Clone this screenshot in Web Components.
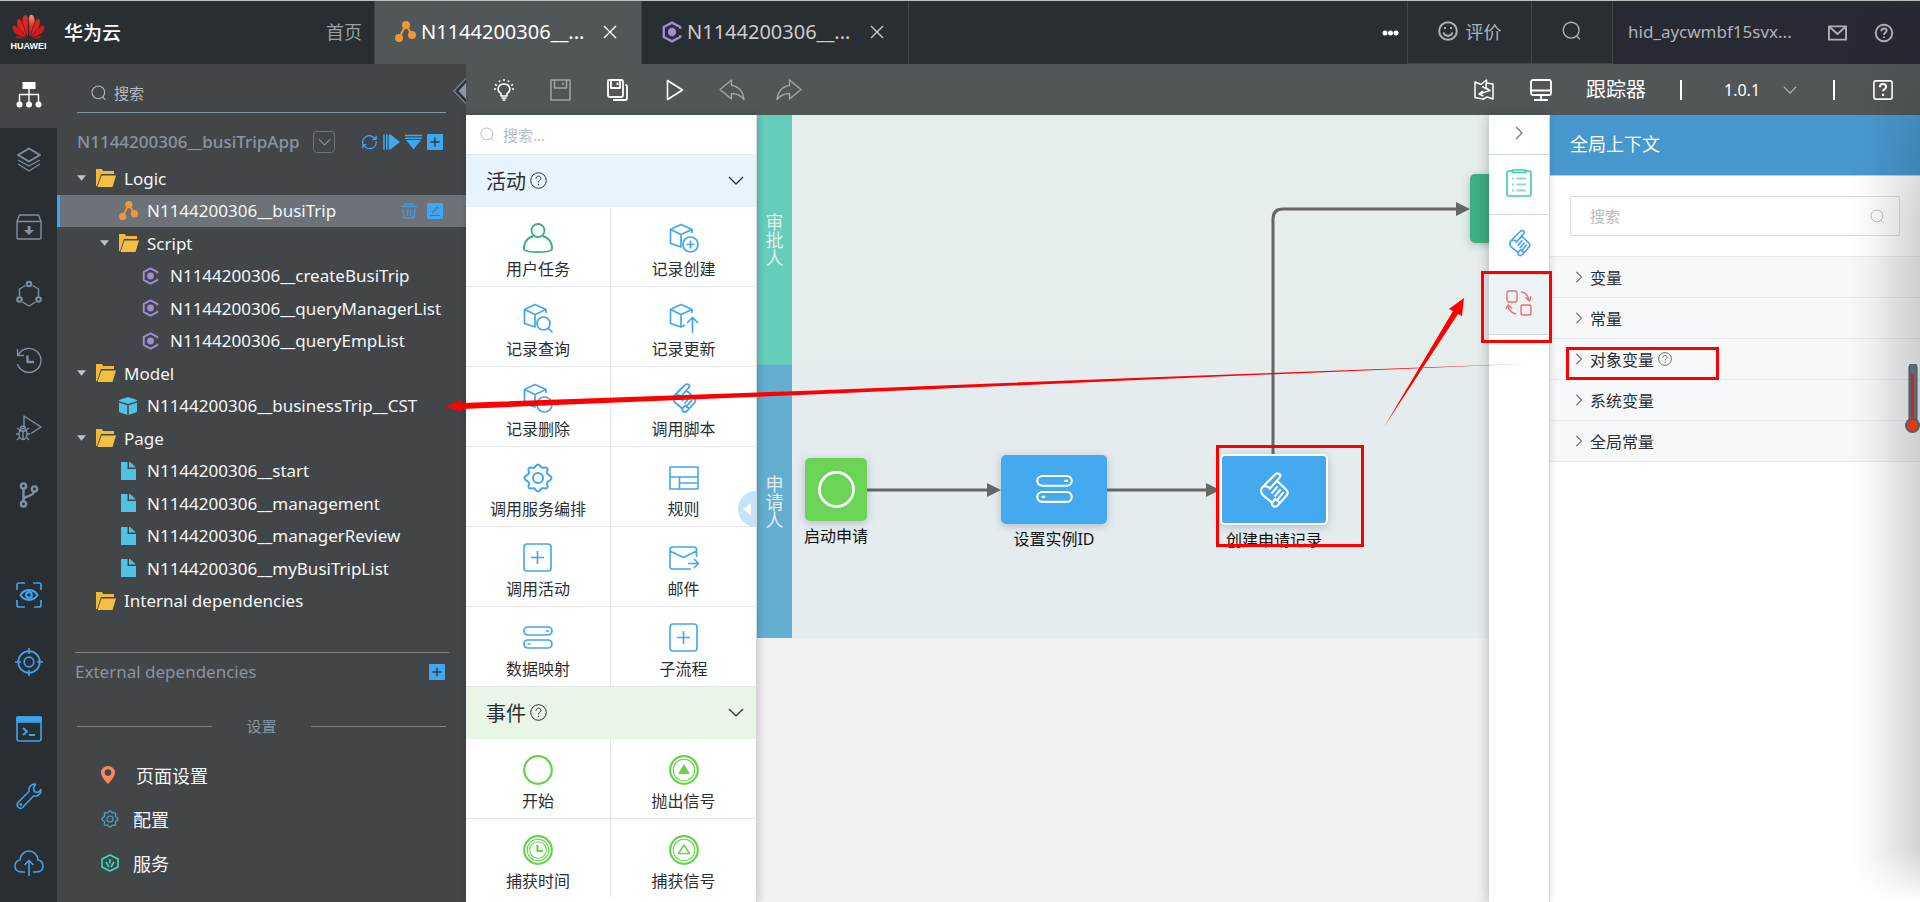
<!DOCTYPE html>
<html lang="zh-CN">
<head>
<meta charset="utf-8">
<meta name="viewport" content="width=device-width, initial-scale=1">
<title>华为云 - N1144200306__busiTrip</title>
<style>
  body { margin: 0; font-family: "Noto Sans", "Noto Sans CJK SC", sans-serif; }
</style>
</head>
<body>
<app-shell></app-shell>

<script>
const CUBE = '<path d="M1.5 6.5 12 1.5l11 5-11 5zM1.5 6.5v14L12 24V11.5M23 6.5V10"/>';
const SCROLL = '<path d="M15.500 2.500 5.500 12.500c-2 2-1.500 5 .5 7L14 26M15.500 2.500c2-2.500 6-1 4.500 1.800L11.500 14c-1-2.500-4.500-2.500-6-1.500M17.500 7.500l7.500 7c1.700 1.700 1.700 3.800.3 5.300L18 28c-2 2-5.500.5-4.500-2.500l2.500-3 4 3M13 18l5-6M15.500 20.500l5-6M18 22.800l5-6"/>';
const GEAR = '<path d="M15 1.500c2 0 2.200 2.600 4 3.200s3.800-1 5.200.4-.9 3.500-.1 5.300 4.400 2 4.400 4.600-3.700 2.800-4.400 4.600 1.500 3.900.1 5.300-3.500-.1-5.200.4-2 3.200-4 3.200-2.300-2.600-4-3.200-3.800 1-5.200-.4.9-3.500.1-5.300S1.500 17.500 1.500 15s3.700-2.800 4.400-4.600S4.400 6.500 5.800 5.100s3.500.1 5.200-.4 2-3.200 4-3.200z"/><circle cx="15" cy="15" r="5"/>';
const SEARCH = '<circle cx="11" cy="11" r="9.500"/><path d="m17.500 18 4 4"/>';
const MAPPING = '<rect x="1" y="4" width="28" height="8" rx="4"/><rect x="1" y="17" width="28" height="8" rx="4"/><path d="M23 8h3M4.500 21h3"/>';
const QUESTION = '<circle cx="12" cy="12" r="11"/><path d="M8.500 9.500c0-5 7-4.500 7-.5 0 2.500-3.500 2.500-3.500 5.500M12 16.500v2"/>';

/* name -> [viewBox, stroke width, markup] */
const ICONS = {
  search: ['0 0 24 24', 1.6, SEARCH],
  close: ['0 0 14 14', 1.4, '<path d="m1 1 12 12M13 1 1 13"/>'],
  chevron: ['0 0 16 9', 1.3, '<path d="m1 1 7 7 7-7"/>'],
  right: ['0 0 8 14', 1.2, '<path d="m1 1 6 6-6 6"/>'],
  question: ['0 0 24 24', 1.4, QUESTION],
  flow: ['0 0 21 21', 2, '<path d="M11 4 4 16.500M11 4l6 10"/><g fill="currentColor" stroke="none"><circle cx="11" cy="4" r="4"/><circle cx="4" cy="17" r="4"/><circle cx="17" cy="14" r="4"/></g>'],
  script: ['0 0 18 20', 2.2, '<path d="M16.500 7V5.500L9 1.500 1.500 5.500v9L9 18.500l7.500-4V13"/><circle cx="9" cy="10" r="3.800" fill="currentColor" stroke="none"/>'],
  more: ['0 0 17 6', 0, '<g fill="currentColor"><circle cx="3" cy="3" r="2.500"/><circle cx="8.500" cy="3" r="2.500"/><circle cx="14" cy="3" r="2.500"/></g>'],
  smile: ['0 0 20 20', 2, '<circle cx="10" cy="10" r="8.800"/><path d="M5.500 11.500c1.500 4.500 7.500 4.500 9 0M7 6v2M13 6v2"/>'],
  mail: ['0 0 20 16', 2, '<rect x="1" y="1" width="18" height="14"/><path d="m2 2 8 7 8-7"/>'],
  help: ['0 0 24 24', 2.6, QUESTION],
  caret: ['0 0 10 6', 0, '<path fill="currentColor" d="M0 0h10L5 6z"/>'],
  folder: ['0 0 20 18', 0, '<path fill="#f0b93a" d="M0 0h6l1 2h11v3H5L1 17H0z"/><path fill="#f2c044" d="M5.500 6.500H20L16.500 18H1.500z"/>'],
  cube: ['0 0 18 18', 0, '<path fill="#4ec3e6" d="M9 0 0 3v1l9 3 9-3V3zM0 5.500v9.500L8.300 18V8.200zM18 5.500v9.500L9.700 18V8.200z"/>'],
  page: ['0 0 15 18', 0, '<path fill="#4ec3e6" d="M0 0h6.500v7H15v11H0zM8 0h1l6 5.500H8z"/>'],
  refresh: ['0 0 18 18', 1.4, '<path d="M1.500 11C0 4 8-1 14 4l2.500 2M16.500 2v4h-4M16.500 8c1 7-7 11-12.500 6.500L1.500 12M1.500 16v-4h4"/>'],
  expand: ['0 0 18 16', 1.6, '<path d="M1 0v16M4 0v16"/><path fill="currentColor" stroke="none" d="M6 0h2l10 8-10 8H6z"/>'],
  collapse: ['0 0 18 16', 1.6, '<path d="M0 1h18M0 4h18"/><path fill="currentColor" stroke="none" d="M1 6h16L9 16z"/>'],
  add: ['0 0 16 16', 0, '<rect width="16" height="16" rx="1" fill="#41a6f0"/><path d="M8 3.500v9M3.500 8h9" stroke="#2b3b48" stroke-width="1.400"/>'],
  trash: ['0 0 16 16', 1.3, '<path d="M0 3.500h16M4 3V1h8v2M2 5.500 3 15h10l1-9.500M6.500 6v7M9.500 6v7"/>'],
  edit: ['0 0 16 16', 0, '<rect width="16" height="16" rx="1" fill="#41a6f0"/><path d="M5 10l6-6M3 12.500h10" stroke="#5c7386" stroke-width="1.200"/>'],
  pin: ['0 0 14 18', 0, '<path fill="#f58660" fill-rule="evenodd" d="M7 0C3 0 0 3 0 6.500 0 10 3 14 7 18c4-4 7-8 7-11.500C14 3 11 0 7 0zm0 3.300a3.300 3.300 0 1 1 0 6.600 3.300 3.300 0 0 1 0-6.600z"/>'],
  gear: ['0 0 30 30', 2, GEAR],
  power: ['0 0 18 18', 1.6, '<path d="M9 1 17 5v8l-8 4-8-4V5zM9 5v4.500M5 8l3 5M13 8l-3 5"/>'],

  sitemap: ['0 0 26 26', 1.4, '<rect x="6.500" y="0" width="13" height="7" fill="currentColor" stroke="none"/><path d="M13 7v15M3.500 22V12.500h19V22"/><g fill="currentColor" stroke="none"><circle cx="3.500" cy="22.500" r="3"/><circle cx="13" cy="22.500" r="3"/><circle cx="22.500" cy="22.500" r="3"/></g>'],
  layers: ['0 0 26 26', 1.3, '<path stroke-width="2" d="m13 1.500 11 6.500-11 6.500L2 8z"/><path d="m2 13 11 6 11-6M2 17l11 7 11-7"/>'],
  archive: ['0 0 26 26', 1.4, '<path d="M1 7.500 3.500 1h19L25 7.500V24c0 .6-.4 1-1 1H2c-.6 0-1-.4-1-1zM1 7.500h24"/><path fill="currentColor" stroke="none" d="M11.500 12h3v4h3.500l-5 5-5-5h3.500z"/>'],
  hexagon: ['0 0 26 26', 1.4, '<path d="M9.500 4.500 3.500 8v7.500M16.500 4.500l6 3.500v7.500M6.500 21l6.500 4 6.500-4"/><g stroke-width="2"><circle cx="13" cy="3" r="2.300"/><circle cx="3.500" cy="18.500" r="2.300"/><circle cx="22.500" cy="18.500" r="2.300"/></g>'],
  history: ['0 0 26 26', 1.4, '<path d="M2 7.500A12 12 0 1 1 1.500 16M1.500 1v6.500H8"/><path stroke-width="2.400" d="M11.500 7.500V14H18"/>'],
  debug: ['0 0 26 26', 1.4, '<path d="M8 11V1l17 11-10 6.500"/><ellipse cx="7" cy="19" rx="4" ry="5.500"/><path d="M3 16h8M7 16v8M0 19h3M11 19h3M1 13l3 2M13 13l-3 2M1 25l3-3M13 25l-3-3M4.500 13.500c0-3 5-3 5 0"/>'],
  branch: ['0 0 26 26', 2.4, '<circle cx="7.500" cy="4" r="2.600"/><circle cx="7.500" cy="22" r="2.600"/><circle cx="18.500" cy="7" r="2.600"/><path d="M7.500 6.500v13M18 9.500c-.5 5-8 4-10 7"/>'],
  eye: ['0 0 26 26', 1.7, '<path d="M1 8V3c0-1.500.7-2 2-2h6M17 1h6c1.300 0 2 .7 2 2v5M25 18v5c0 1.300-.7 2-2 2h-5M9 25H3c-1.300 0-2-.7-2-2v-5"/><path stroke-width="2.200" d="M4.500 13c4-6.500 13-6.500 17 0-4 6.500-13 6.500-17 0z"/><circle cx="13" cy="13" r="2.800" stroke-width="2.200"/>'],
  target: ['0 0 28 28', 1.7, '<circle cx="14" cy="14" r="10.800"/><circle cx="14" cy="14" r="4.800"/><path d="M14 0v6M14 22v6M0 14h6M22 14h6"/>'],
  terminal: ['0 0 26 26', 1.6, '<rect x="1" y="1" width="24" height="24" rx="2"/><path fill="currentColor" d="M1 1h24v5H1z"/><path stroke-width="2" d="m7 12 4 3.500L7 19M13 19h6"/>'],
  wrench: ['0 0 26 26', 1.6, '<path d="M19.500 1.200c-4-.6-7.500 3-6.300 7L2 19.500C-.5 22.500 3.500 27 6.500 24.500L17.500 13c4.500 1.200 8-2.500 7.500-6.500l-3 3-3.500-.8-1-3.700z"/><circle cx="4.800" cy="21.500" r=".6"/>'],
  cloud: ['0 0 30 26', 1.6, '<path d="M11 22H7.500C3 22 1 19 1 16c0-3 2-5.500 5-6 .5-5.500 4.500-9 9-9s8.500 3.500 9 9c3 .5 5 3 5 6s-2 6-6.500 6H19M15 26V10.500M10.500 15l4.500-4.500 4.500 4.500"/>'],

  bulb: ['0 0 20 22', 1.6, '<path d="M7 17v-2.500C2 11.500 4 5 10 5s8 6.500 3 9.500V17zM7.500 19h5M8.500 21h3M10 0v2M5 1.500l1 1.500M15 1.500 14 3M1 5.500l2 1M19 5.500l-2 1M0 10h2M18 10h2"/>'],
  save: ['0 0 21 22', 1.5, '<path d="M1 1h19v20H1zM4.500 1v8h12V1M13 3.500V6"/>'],
  saveall: ['0 0 21 22', 1.8, '<path d="M2 1h12.500C16 1 16 2 16 3v13c0 1.500-.5 2-2 2H3c-1.500 0-2-.5-2-2V2c0-.6.400-1 1-1zM4 1.500V9h9V1.500M10.500 3.500V6M18.500 5.500 20 7v12c0 1.500-.5 2-2 2H6"/>'],
  play: ['0 0 18 22', 1.6, '<path d="M1.500 1.500v19L16.500 11z"/>'],
  undo: ['0 0 26 22', 1.4, '<path d="M12.500 1v5.500C19 7 24 12 25 20.500 21.500 16 18 14.500 12.500 14.500V20L1 10.500z"/>'],
  redo: ['0 0 26 22', 1.4, '<path d="M13.500 1v5.500C7 7 2 12 1 20.500c3.500-4.500 7-6 12.500-6V20L25 10.500z"/>'],
  map: ['0 0 20 22', 1.5, '<path d="M8.500 20 1 18.500V3l6 2.500M7 5.500 12.500 1v3l6.500 1v15l-6-2-4.500 2.500M12 4.500v4l4 3-11 3.500M9 12l-4 3 4.500 2M8 7.500l8 4"/>'],
  monitor: ['0 0 22 22', 1.8, '<rect x="1" y="1" width="20" height="15" rx="2"/><path d="M1 11.500h20M11 16v4.500M4 21h14"/>'],
  helpbox: ['0 0 22 22', 1.8, '<rect x="1" y="1" width="20" height="20" rx="2"/><path stroke-width="2.200" d="M7.500 8c0-5 7-4.500 7-.5 0 2.500-3.500 2.500-3.500 5M11 15v2.500"/>'],

  user: ['0 0 30 30', 1.8, '<circle cx="15" cy="7.500" r="6.500"/><path d="M10.500 13C4 14.500.5 20 1 26.500 4 30 26 30 29 26.500 29.500 20 26 14.500 19.500 13"/>'],
  record: ['0 0 30 30', 1.7, CUBE + '<circle cx="21.500" cy="21.500" r="7.500"/><path d="M21.500 17.500v8M17.500 21.500h8"/>'],
  query: ['0 0 30 30', 1.7, CUBE + '<circle cx="20.500" cy="20.500" r="6.500"/><path d="m25 25 4.500 4.500"/>'],
  update: ['0 0 30 30', 1.7, CUBE + '<path d="M23.500 30V15M18 20l5.500-5.500 5.500 5.500M12 24l4-2"/>'],
  remove: ['0 0 30 30', 1.7, CUBE + '<circle cx="21.500" cy="21.500" r="7.500"/><path d="M17.500 21.500h8"/>'],
  scroll: ['0 0 30 30', 1.8, SCROLL],
  rule: ['0 0 30 30', 1.6, '<path d="M1 4h28v22H1zM1 14h28M10.500 14v12M10.500 20H29"/>'],
  plusbox: ['0 0 30 30', 1.6, '<rect x="1" y="1" width="27" height="27" rx="3"/><path d="M14.500 8v13M8 14.500h13"/>'],
  send: ['0 0 30 30', 1.6, '<path d="M22 26H3.500C2 26 1 25 1 23.500v-17C1 5 2 4 3.500 4h21C26 4 27.500 5 27.500 6.500V14M1 8l13.500 6.500L27.500 8M19 20.500h10M25 16l4.500 4.500L25 25"/>'],
  mapping: ['0 0 30 30', 1.7, MAPPING],
  start: ['0 0 30 30', 2.2, '<circle cx="15" cy="15" r="13.800"/>'],
  throw: ['0 0 30 30', 1.1, '<circle cx="15" cy="15" r="13.800" stroke-width="2.200"/><circle cx="15" cy="15" r="10.800"/><path fill="currentColor" d="m15 10 5 8.500H10z"/>'],
  timer: ['0 0 30 30', 1.1, '<circle cx="15" cy="15" r="13.800" stroke-width="2.200"/><circle cx="15" cy="15" r="10.800"/><circle cx="15" cy="15" r="8.300"/><path stroke-width="2.200" d="M14.500 10v6H20"/>'],
  catch: ['0 0 30 30', 1.1, '<circle cx="15" cy="15" r="13.800" stroke-width="2.200"/><circle cx="15" cy="15" r="10.800"/><path stroke-width="1.500" d="m15 10 5.500 8.500h-11z"/>'],

  list: ['0 0 26 28', 1.6, '<path d="M6 2H3C1.500 2 1 3 1 4v21c0 1.500 1 2 2 2h20c1.500 0 2-.7 2-2V4c0-1.500-.7-2-2-2h-3M6.500 1h13v2.500h-13z"/><path stroke="#8fdacb" stroke-width="2" d="M6 9.500h2M10.500 9.500H20M6 15.500h2M10.500 15.500H20M6 21.500h2M10.500 21.500H20"/>'],
  context: ['0 0 26 26', 1.4, '<rect x="1" y="1" width="10" height="11" rx="2"/><rect x="15" y="15" width="10" height="10" rx="2"/><path d="M15 2c5 0 7 4 8 8.500M19.500 7.500l4 3.500 1.500-4.500M10 24c-4-1-7-4-8-8M0 19l2-4 4 3"/>'],
};

const define = (name, html, setup) => {
  const tpl = document.createElement('template');
  tpl.innerHTML = html;
  customElements.define(name, class extends HTMLElement {
    constructor() {
      super();
      this.attachShadow({ mode: 'open' }).append(tpl.content.cloneNode(true));
    }
    connectedCallback() { if (setup) setup(this, this.shadowRoot); }
  });
};

const BUTTON = 'button{appearance:none;border:0;background:none;padding:0;margin:0;font:inherit;color:inherit;display:flex;align-items:center;justify-content:center;cursor:pointer}';

define('ui-icon', `
  <style>
    :host{display:inline-block;flex:none;line-height:0}
    svg{display:block;width:100%;height:100%;overflow:visible;fill:none;stroke:currentColor;stroke-linejoin:round}
  </style><svg aria-hidden="true"></svg>`, (el, root) => {
  const [box, width, body] = ICONS[el.getAttribute('name')];
  const svg = root.querySelector('svg');
  svg.setAttribute('viewBox', box);
  svg.setAttribute('stroke-width', width);
  if (!width) svg.style.stroke = 'none';
  svg.innerHTML = body;
  const [, , w, h] = box.split(' ');
  el.style.width = (el.getAttribute('w') || w) + 'px';
  el.style.height = (el.getAttribute('h') || h) + 'px';
});

/* ---------- header ---------- */
define('brand-logo', `
  <style>
    :host{display:flex;flex-direction:column;align-items:center;width:33px;gap:2px}
    svg{width:33px;height:25px;display:block}
    span{font:bold 9px/10px "Liberation Sans",sans-serif;color:#fff}
  </style>
  <svg viewBox="0 0 33 25" aria-hidden="true"><defs><linearGradient id="g" x1="0" y1="0" x2="0" y2="1"><stop offset="0" stop-color="#f7a070"/><stop offset=".5" stop-color="#e8302a"/><stop offset="1" stop-color="#d8101c"/></linearGradient></defs>
    <g stroke="#292e32" stroke-width=".7">
      <path fill="#e2231f" d="M16 23.500C10 14 8 6 12 1c2.500-1.500 4.500 0 4.300 5z"/><path fill="url(#g)" d="M17 23.500c6-9.500 8-17.500 4-22.500-2.500-1.500-4.500 0-4.300 5z"/>
      <path fill="#e2231f" d="M15 23.500C7 17 2.500 11 6 4c4 1 6 8 9 19.500z"/><path fill="#e2231f" d="M18 23.500C26 17 30.500 11 27 4c-4 1-6 8-9 19.500z"/>
      <path fill="#d8181e" d="M14.500 24C4 22-1.500 17 1 11c5 1 9 6 13.500 13z"/><path fill="#d8181e" d="M18.500 24c10.500-2 16-7 13.500-13-5 1-9 6-13.500 13z"/>
      <path fill="#c8141b" d="M14 24.800H6c-1 0-3-2-3-2.800 3-.5 8 .5 11 2.800zM19 24.800h8c1 0 3-2 3-2.800-3-.5-8 .5-11 2.800z"/>
    </g></svg><span>HUAWEI</span>`);

define('editor-tab', `
  <style>${BUTTON}
    :host{display:flex;align-items:center;box-sizing:border-box;width:267px;padding:0 24px 2px 20px;border-right:1px solid #40464a;color:#ccc}
    :host([active]){background:#515658;color:#fff}
    .name{flex:1;justify-content:flex-start;gap:5px;font-size:20px;line-height:27px}
  </style>
  <button class="name"><slot name="icon"></slot><slot></slot></button>
  <button aria-label="关闭"><ui-icon name="close"></ui-icon></button>`);

define('app-header', `
  <style>${BUTTON}
    :host{display:flex;height:63px;background:#292e32;border-top:1px solid #b9bfba;color:#aeb2b8}
    .brand{display:flex;align-items:center;gap:19px;padding-left:12px;width:375px;box-sizing:border-box}
    .brand b{color:#fff;font-size:19px;font-weight:500;padding-bottom:2px}
    .brand a{margin-left:auto;padding:0 12px 3px 0;color:#9aa0a6;text-decoration:none;font-size:18px}
    nav{display:flex;flex:1}
    .brand,nav{border-right:1px solid #40464a}
    .more{margin-left:auto;padding:0 8px;color:#fff}
    .cell{border-right:1px solid #40464a;border-bottom:1px solid #40464a;gap:8px;font-size:18px;box-sizing:border-box;padding-bottom:2px}
    .rate{width:124px}.find{width:81px}
    .user{display:flex;align-items:center;box-sizing:border-box;width:307px;padding:0 27px 0 15px;background:#282a33;font-size:17px}
    .user span{flex:1;padding-bottom:2px}
    .user button+button{margin-left:28px}
    .orange{color:#ef9639}.violet{color:#a08bd4}
  </style>
  <div class="brand"><brand-logo></brand-logo><b>华为云</b><a href="#home">首页</a></div>
  <nav>
    <editor-tab active><ui-icon slot="icon" class="orange" name="flow"></ui-icon>N1144200306__...</editor-tab>
    <editor-tab><ui-icon slot="icon" class="violet" name="script" w="20" h="22"></ui-icon>N1144200306__...</editor-tab>
    <button class="more" aria-label="更多"><ui-icon name="more"></ui-icon></button>
  </nav>
  <button class="cell rate"><ui-icon name="smile"></ui-icon>评价</button>
  <button class="cell find" aria-label="搜索"><ui-icon name="search" w="20" h="20"></ui-icon></button>
  <div class="user"><span>hid_aycwmbf15svx...</span>
    <button aria-label="消息"><ui-icon name="mail" w="19" h="16"></ui-icon></button>
    <button aria-label="帮助"><ui-icon name="help" w="18" h="18"></ui-icon></button></div>`);

/* ---------- left rail ---------- */
define('nav-rail', `
  <style>${BUTTON}
    :host{display:flex;flex-direction:column;width:57px;flex:none;background:#292e32;color:#8090a0}
    button{height:67px;box-sizing:border-box;padding-bottom:3px}
    .on{height:64px;background:#434648;color:#fff}
    .blue{color:#3fa2ec}
    .gap{margin-top:33px}
  </style>
  <button class="on" aria-label="结构"><ui-icon name="sitemap"></ui-icon></button>
  <button aria-label="图层"><ui-icon name="layers"></ui-icon></button>
  <button aria-label="资产"><ui-icon name="archive"></ui-icon></button>
  <button aria-label="依赖"><ui-icon name="hexagon"></ui-icon></button>
  <button aria-label="历史"><ui-icon name="history"></ui-icon></button>
  <button aria-label="调试"><ui-icon name="debug"></ui-icon></button>
  <button aria-label="分支"><ui-icon name="branch"></ui-icon></button>
  <button class="blue gap" aria-label="预览"><ui-icon name="eye"></ui-icon></button>
  <button class="blue" aria-label="定位"><ui-icon name="target"></ui-icon></button>
  <button class="blue" aria-label="终端"><ui-icon name="terminal"></ui-icon></button>
  <button class="blue" aria-label="工具"><ui-icon name="wrench"></ui-icon></button>
  <button class="blue" aria-label="发布"><ui-icon name="cloud"></ui-icon></button>`);

/* ---------- project explorer ---------- */
define('tree-row', `
  <style>${BUTTON}
    :host{display:flex;align-items:center;padding-right:23px;color:#f4f6f8;font-size:17px;border-left:3px solid transparent;--indent:0px}
    :host([level="1"]){--indent:23px}
    :host([level="2"]){--indent:46px}
    :host([selected]){background:#6c7278;border-left-color:#41a6f0}
    .row{flex:1;justify-content:flex-start;padding-left:calc(17px + var(--indent))}
    .caret{width:9px;margin-right:10px;display:flex;color:#bcc4cc}
    .glyph{width:19px;margin-right:9px;display:flex}
    .orange{color:#ef9639}.violet{color:#a08bd4}
    .tools{display:none;gap:10px;color:#3f9be0}
    :host([selected]) .tools{display:flex}
  </style>
  <button class="row"><span class="caret"></span><span class="glyph"></span><slot></slot></button>
  <span class="tools"><button aria-label="删除"><ui-icon name="trash"></ui-icon></button><button aria-label="编辑"><ui-icon name="edit"></ui-icon></button></span>`,
(el, root) => {
  const kind = el.getAttribute('kind');
  if (el.hasAttribute('open')) root.querySelector('.caret').innerHTML = '<ui-icon name="caret" w="9" h="6"></ui-icon>';
  const tint = { flow: 'orange', script: 'violet' }[kind] || '';
  const size = { flow: 'w="19" h="19"', script: 'w="17" h="18"', page: 'w="19"' }[kind] || '';
  root.querySelector('.glyph').innerHTML = `<ui-icon class="${tint}" name="${kind}" ${size}></ui-icon>`;
});

define('project-explorer', `
  <style>${BUTTON}
    :host{position:relative;display:flex;flex-direction:column;width:409px;flex:none;background:#434648;color:#8894a2;font-size:17px}
    label{display:flex;align-items:center;box-sizing:border-box;gap:5px;height:49px;margin:0 20px;padding:9px 0 0 14px;border-bottom:1px solid #8296a6;color:#b4bac0}
    input{flex:1;min-width:0;border:0;outline:0;background:none;font:inherit;font-size:15px;color:#fff}
    input::placeholder{color:#b4bac0;opacity:1}
    .app{display:flex;align-items:center;height:49px;padding:8px 23px 0 20px;box-sizing:border-box}
    .app b{font-weight:500}
    .drop{box-sizing:border-box;width:22px;height:22px;margin-left:14px;border:1px solid #6b747c;border-radius:4px}
    .acts{display:flex;gap:5px;margin-left:auto;color:#41a6f0}
    .tree{display:grid;grid-auto-rows:1fr;height:455px}
    .ext{display:flex;align-items:center;justify-content:space-between;box-sizing:border-box;margin:35px 17px 0 18px;padding:0 4px 0 0;border-top:1px solid #808080;height:38px}
    .sep{display:flex;align-items:center;justify-content:space-between;margin:24px 20px 0;font-size:15px;line-height:24px}
    .sep::before,.sep::after{content:"";width:135px;height:1px;background:#808080}
    ul{list-style:none;margin:15px 0 0;padding:0 0 0 44px}
    li{display:flex;align-items:center;height:44px;gap:14px}
    li a{color:#f4f6f8;text-decoration:none;font-size:18px}
    li:first-child{gap:21px}
    .handle{position:absolute;right:0;top:14px}
    .handle svg{display:block;width:13px;height:26px}
  </style>
  <label><ui-icon name="search" w="16" h="16"></ui-icon><input type="text" placeholder="搜索" aria-label="搜索"></label>
  <div class="app"><b>N1144200306__busiTripApp</b>
    <button class="drop" aria-label="选择应用"><ui-icon name="chevron" w="13" h="8"></ui-icon></button>
    <span class="acts">
      <button aria-label="刷新"><ui-icon name="refresh" w="17" h="16"></ui-icon></button>
      <button aria-label="展开"><ui-icon name="expand" w="17"></ui-icon></button>
      <button aria-label="折叠"><ui-icon name="collapse" w="17"></ui-icon></button>
      <button aria-label="新增"><ui-icon name="add"></ui-icon></button></span></div>
  <div class="tree">
    <tree-row kind="folder" open>Logic</tree-row>
    <tree-row kind="flow" level="1" selected>N1144200306__busiTrip</tree-row>
    <tree-row kind="folder" level="1" open>Script</tree-row>
    <tree-row kind="script" level="2">N1144200306__createBusiTrip</tree-row>
    <tree-row kind="script" level="2">N1144200306__queryManagerList</tree-row>
    <tree-row kind="script" level="2">N1144200306__queryEmpList</tree-row>
    <tree-row kind="folder" open>Model</tree-row>
    <tree-row kind="cube" level="1">N1144200306__businessTrip__CST</tree-row>
    <tree-row kind="folder" open>Page</tree-row>
    <tree-row kind="page" level="1">N1144200306__start</tree-row>
    <tree-row kind="page" level="1">N1144200306__management</tree-row>
    <tree-row kind="page" level="1">N1144200306__managerReview</tree-row>
    <tree-row kind="page" level="1">N1144200306__myBusiTripList</tree-row>
    <tree-row kind="folder">Internal dependencies</tree-row>
  </div>
  <div class="ext"><span>External dependencies</span><button aria-label="新增依赖"><ui-icon name="add"></ui-icon></button></div>
  <div class="sep">设置</div>
  <ul>
    <li><ui-icon name="pin"></ui-icon><a href="#page">页面设置</a></li>
    <li><ui-icon name="gear" w="18" h="18" style="color:#48a9c8"></ui-icon><a href="#config">配置</a></li>
    <li><ui-icon name="power" style="color:#35e0bf"></ui-icon><a href="#service">服务</a></li>
  </ul>
  <button class="handle" aria-label="收起"><svg viewBox="0 0 13 26"><path d="M13 .5 1 13l12 12.500" fill="#2b3238" stroke="#7c8794" stroke-width="1.200"/><path d="M13 5 5.500 13l7.500 8z" fill="#8b98a8"/></svg></button>`);

/* ---------- toolbar ---------- */
define('editor-toolbar', `
  <style>${BUTTON}
    :host{display:flex;align-items:center;height:51px;background:#515658;color:#fff;padding:0 9px 0 9px}
    button{width:57px;height:51px}
    .dim{color:#a2a5a7}
    .right{display:flex;align-items:center;margin-left:auto}
    .trace{box-sizing:border-box;width:auto;font-size:20px;margin:0 34px 0 17px;padding-bottom:3px}
    i{width:2px;height:20px;background:#fff}
    .ver{position:relative;display:flex;align-items:center;margin:0 36px 0 42px;width:73px}
    select{appearance:none;border:0;outline:0;background:none;color:#fff;font:inherit;font-size:16px;padding:0;width:73px}
    .ver ui-icon{position:absolute;right:0;color:#b9bcbd;pointer-events:none}
    .right button:last-child{margin-left:19px}
  </style>
  <button aria-label="提示"><ui-icon name="bulb"></ui-icon></button>
  <button aria-label="保存" class="dim"><ui-icon name="save"></ui-icon></button>
  <button aria-label="全部保存"><ui-icon name="saveall"></ui-icon></button>
  <button aria-label="运行"><ui-icon name="play"></ui-icon></button>
  <button aria-label="撤销" class="dim"><ui-icon name="undo"></ui-icon></button>
  <button aria-label="重做" class="dim"><ui-icon name="redo"></ui-icon></button>
  <span class="right">
    <button aria-label="地图"><ui-icon name="map"></ui-icon></button>
    <button aria-label="预览"><ui-icon name="monitor"></ui-icon></button>
    <button class="trace">跟踪器</button><i></i>
    <label class="ver"><select aria-label="版本"><option>1.0.1</option></select><ui-icon name="chevron" w="14" h="8"></ui-icon></label><i></i>
    <button aria-label="帮助"><ui-icon name="helpbox" w="20" h="22"></ui-icon></button>
  </span>`);

/* ---------- palette ---------- */
define('palette-item', `
  <style>${BUTTON}
    :host{display:block;color:#41a6f0;border-right:1px solid #e4e7eb;border-bottom:1px solid #e4e7eb}
    :host(:nth-child(odd)){border-right:0}
    :host([last]){border-bottom:0}
    button{flex-direction:column;box-sizing:border-box;width:100%;height:79px;gap:4px;padding-top:10px}
    span{color:#2b2f33;font-size:16px;line-height:24px}
  </style>
  <button><span><slot></slot></span></button>`, (el, root) => {
  const icon = document.createElement('ui-icon');
  icon.setAttribute('name', el.getAttribute('name'));
  root.querySelector('button').prepend(icon);
});

define('palette-group', `
  <style>${BUTTON}
    :host{display:block}
    .head{box-sizing:border-box;width:100%;height:52px;padding:0 12px 2px 20px;justify-content:flex-start;gap:4px;color:#2b2f33;font-size:20px;background:var(--head)}
    .head ui-icon:last-child{margin-left:auto}
    .grid{display:grid;grid-template-columns:1fr 1fr}
  </style>
  <button class="head" aria-expanded="true"><slot name="title"></slot><ui-icon name="question" w="17" h="17"></ui-icon><ui-icon name="chevron"></ui-icon></button>
  <div class="grid"><slot></slot></div>`);

define('node-palette', `
  <style>${BUTTON}
    :host{position:relative;z-index:2;display:block;width:290px;flex:none;background:#fff;border-right:1px solid #d5d9dc;box-shadow:1px 0 8px rgba(0,0,0,.2)}
    label{display:flex;align-items:center;gap:6px;height:39px;padding:0 14px;border-bottom:1px solid #e4e7eb;color:#b6bcc4}
    input{flex:1;min-width:0;border:0;outline:0;font:inherit;font-size:15px}
    input::placeholder{color:#b6bcc4;opacity:1}
    .act{--head:#e7f3fd}.evt{--head:#e8f6e6}
    .evt palette-item{color:#66d24e}
    .act .user{color:#3dae82}
    .handle{position:absolute;right:0;top:376px;width:18px;height:36px;border-radius:18px 0 0 18px;background:#c4e4fb}
    .handle::before{content:"";border:6px solid transparent;border-left:0;border-right:8px solid #fff}
  </style>
  <label><ui-icon name="search" w="15" h="15"></ui-icon><input type="text" placeholder="搜索..." aria-label="搜索组件"></label>
  <palette-group class="act"><span slot="title">活动</span>
    <palette-item class="user" name="user">用户任务</palette-item><palette-item name="record">记录创建</palette-item>
    <palette-item name="query">记录查询</palette-item><palette-item name="update">记录更新</palette-item>
    <palette-item name="remove">记录删除</palette-item><palette-item name="scroll">调用脚本</palette-item>
    <palette-item name="gear">调用服务编排</palette-item><palette-item name="rule">规则</palette-item>
    <palette-item name="plusbox">调用活动</palette-item><palette-item name="send">邮件</palette-item>
    <palette-item name="mapping">数据映射</palette-item><palette-item name="plusbox">子流程</palette-item>
  </palette-group>
  <palette-group class="evt"><span slot="title">事件</span>
    <palette-item name="start">开始</palette-item><palette-item name="throw">抛出信号</palette-item>
    <palette-item last name="timer">捕获时间</palette-item><palette-item last name="catch">捕获信号</palette-item>
  </palette-group>
  <button class="handle" aria-label="收起组件面板"></button>`);

/* ---------- canvas ---------- */
define('swim-lane', `
  <style>
    :host{display:flex}
    h2{display:flex;align-items:center;justify-content:center;width:35px;margin:0;background:var(--lane);color:#e6ecec;font-size:18px;font-weight:400;line-height:18px;text-align:center}
    span{width:18px;white-space:normal;overflow-wrap:anywhere}
    div{flex:1;background:var(--fill)}
  </style><h2><span><slot></slot></span></h2><div></div>`);

define('flow-node', `
  <style>
    :host{position:absolute;display:flex;flex-direction:column;align-items:center;gap:3px;font-size:16px;color:#111}
    .box{display:flex;align-items:center;justify-content:center;box-sizing:border-box;width:106px;height:69px;border-radius:5px;background:#45a9f0;color:#fff;box-shadow:0 2px 8px rgba(60,80,100,.3)}
    :host([kind="start"]) .box{width:62px;height:63px;background:#6bd355}
    :host([kind="task"]) .box{width:80px;background:#3dae82}
    :host([selected]) .box{border:2px solid #fff;width:108px;height:71px}
    span{line-height:25px;white-space:nowrap}
  </style><div class="box"><slot name="icon"></slot></div><span><slot></slot></span>`);

define('flow-canvas', `
  <style>
    :host{position:relative;display:block;flex:1;min-width:0;overflow:hidden;background:#f1f1f1}
    swim-lane{height:250px}
    .approve{--lane:#65cebb;--fill:#e5eeec}
    .apply{--lane:#62afd1;--fill:#e4ecef;height:273px}
    svg.wires{position:absolute;left:0;top:0;width:732px;height:523px;fill:none;stroke:#666;stroke-width:3}
    #n1{left:47px;top:343px}#n2{left:244px;top:340px}#n3{left:463px;top:339px}#n4{left:713px;top:59px}
  </style>
  <swim-lane class="approve">审批人</swim-lane>
  <swim-lane class="apply">申请人</swim-lane>
  <svg class="wires" viewBox="0 0 732 523" aria-hidden="true">
    <path d="M109 375h125M349 375h104M516 340V104q0-10 10-10h173"/>
    <g fill="#666" stroke="none"><path d="M230 368v14l14-7zM449 368v14l14-7zM699 87v14l14-7z"/></g>
  </svg>
  <flow-node id="n1" kind="start"><ui-icon slot="icon" name="start" w="37" h="37"></ui-icon>启动申请</flow-node>
  <flow-node id="n2"><ui-icon slot="icon" name="mapping" w="37" h="37"></ui-icon>设置实例ID</flow-node>
  <flow-node id="n3" selected><ui-icon slot="icon" name="scroll" w="36" h="36"></ui-icon>创建申请记录</flow-node>
  <flow-node id="n4" kind="task"></flow-node>`);

/* ---------- right side ---------- */
define('side-rail', `
  <style>${BUTTON}
    :host{position:relative;z-index:1;display:flex;flex-direction:column;box-sizing:border-box;width:61px;flex:none;background:#fff;border-right:1px solid #d2d5d8;box-shadow:-2px 0 10px rgba(0,0,0,.2)}
    button{height:60px;box-sizing:border-box;padding-bottom:4px;border-bottom:1px solid #d2d8da}
    .first{height:40px;color:#777}
    .on{background:#ecf4f8;color:#f26d6d}
  </style>
  <button class="first" aria-label="收起"><ui-icon name="right"></ui-icon></button>
  <button aria-label="属性" style="color:#38cdb6"><ui-icon name="list"></ui-icon></button>
  <button aria-label="脚本" style="color:#41a6f0"><ui-icon name="scroll" w="27" h="28"></ui-icon></button>
  <button class="on" aria-label="全局上下文"><ui-icon name="context"></ui-icon></button>`);

define('context-section', `
  <style>${BUTTON}
    :host{display:block;border-bottom:1px solid #e6e9f0}
    button{width:100%;height:40px;padding-left:25px;justify-content:flex-start;color:#2b2f33;font-size:16px}
    ui-icon{color:#555}
    .mark{margin-right:7px}
    .tip{display:none;margin-left:4px}
    :host([tip]) .tip{display:block}
  </style>
  <button aria-expanded="false"><ui-icon class="mark" name="right" w="8" h="12"></ui-icon><slot></slot><ui-icon class="tip" name="question" w="14" h="14"></ui-icon></button>`);

define('context-panel', `
  <style>
    :host{display:block;width:370px;flex:none;background:#fff}
    h1{margin:0;height:61px;box-sizing:border-box;padding:0 20px;font-size:18px;font-weight:400;line-height:58px;color:#fff;background:#4898d0;border-bottom:1px solid #c8d0d4}
    label{display:flex;align-items:center;box-sizing:border-box;height:40px;margin:20px 20px;padding:0 14px 0 19px;border:1px solid #d9dce6;border-radius:2px;color:#b6bcc4}
    input{flex:1;min-width:0;border:0;outline:0;padding:0;background:none;font:inherit;font-size:15px}
    input::placeholder{color:#b6bcc4;opacity:1}
    section{border-top:1px solid #e6e9f0;background:#f6f8fa}
  </style>
  <h1>全局上下文</h1>
  <label><input type="text" placeholder="搜索" aria-label="搜索变量"><ui-icon name="search" w="15" h="15"></ui-icon></label>
  <section>
    <context-section>变量</context-section>
    <context-section>常量</context-section>
    <context-section tip>对象变量</context-section>
    <context-section>系统变量</context-section>
    <context-section>全局常量</context-section>
  </section>`);

/* ---------- overlays ---------- */
define('edge-meter', `
  <style>
    :host{position:absolute;z-index:4;right:0;top:0;bottom:0;width:70px;pointer-events:none}
    .shade{position:absolute;inset:0;background:linear-gradient(to right,rgba(0,0,0,0),rgba(0,0,0,.03) 30%,rgba(0,0,0,.17));-webkit-mask:linear-gradient(transparent,#000 220px,#000 calc(100% - 50px),transparent);mask:linear-gradient(transparent,#000 220px,#000 calc(100% - 50px),transparent)}
    svg{position:absolute;right:0;top:364px;width:15px;height:70px}
  </style>
  <div class="shade"></div>
  <svg viewBox="0 0 15 70" aria-hidden="true"><rect x="4" y="0" width="8" height="62" rx="3" fill="#5b6c77" stroke="#43525c"/><circle cx="7.500" cy="61.500" r="7.500" fill="#4f5f6a"/><path d="M7.500 10v52" stroke="#d0241a" stroke-width="3"/><circle cx="7.500" cy="61.500" r="5.500" fill="#dd3b16"/></svg>`);

define('annotation-layer', `
  <style>
    :host{position:absolute;z-index:3;left:0;top:0;pointer-events:none}
    svg{display:block;width:1730px;height:560px}
  </style>
  <svg viewBox="0 0 1730 560" aria-hidden="true">
    <g fill="red"><path d="M445 406.500l17-6.500v3L800 391l360-14 385-14-385 16-360 16-338 14v3z"/>
      <path d="M1384 427l69-116-4-2 15-11-2 18-4-2z"/></g>
    <g fill="none" stroke="red" stroke-width="3"><path d="M1482.500 272.500h68v69h-68zM1567.500 348.500h150v30h-150zM1217.500 446.500h145v99h-145z"/></g>
  </svg>`);

define('app-shell', `
  <style>
    :host{position:relative;display:flex;flex-direction:column;min-height:100vh;overflow:hidden}
    main{display:flex;flex:1}
    .work{display:flex;flex-direction:column;flex:1;min-width:0}
    .stage{display:flex;flex:1}
  </style>
  <app-header></app-header>
  <main>
    <nav-rail></nav-rail>
    <project-explorer></project-explorer>
    <div class="work">
      <editor-toolbar></editor-toolbar>
      <div class="stage"><node-palette></node-palette><flow-canvas></flow-canvas><side-rail></side-rail><context-panel></context-panel></div>
    </div>
  </main>
  <annotation-layer></annotation-layer>
  <edge-meter></edge-meter>`);
</script>
</body>
</html>
